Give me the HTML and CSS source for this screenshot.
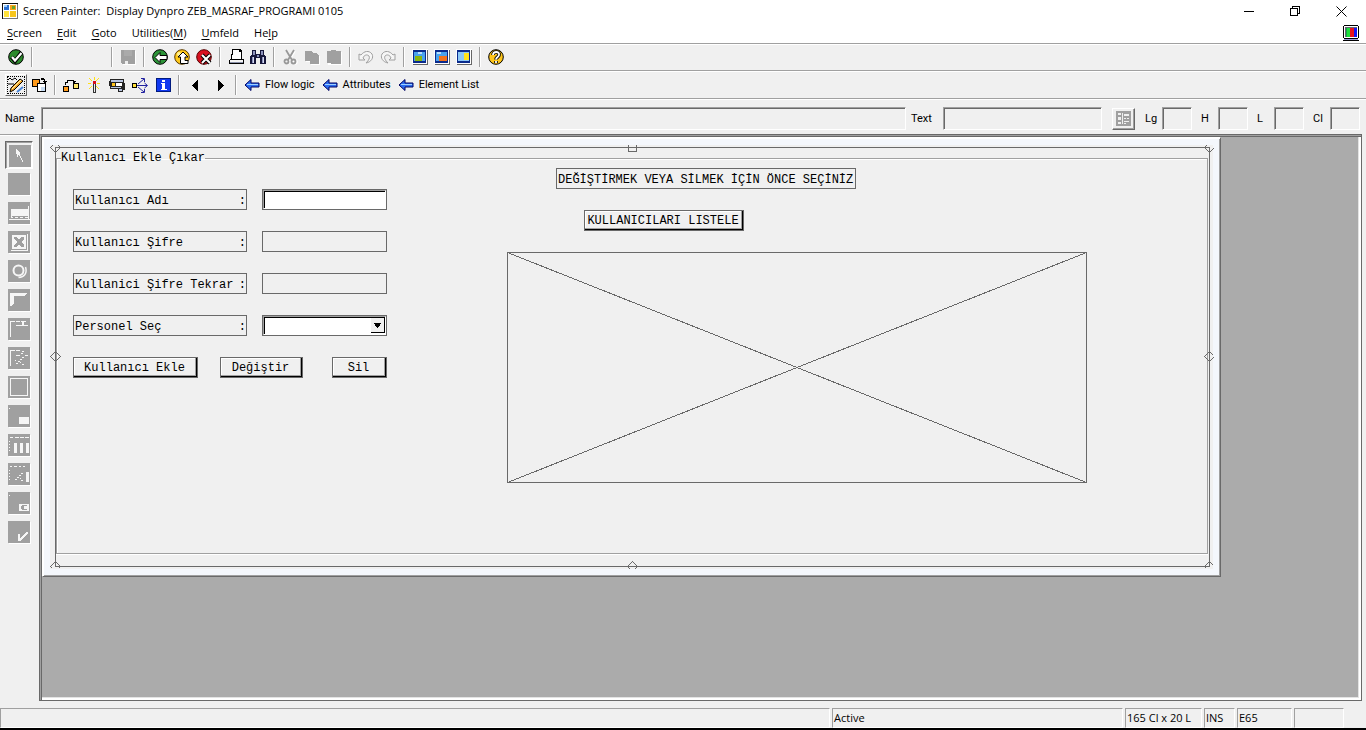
FILE: index.html
```html
<!DOCTYPE html>
<html lang="tr">
<head>
<meta charset="utf-8">
<title>Screen Painter</title>
<link rel="stylesheet" href="styles.css">
</head>
<body>
<header class="titlebar">
  <svg class="ic" viewBox="0 0 16 16"><path fill="#111" d="M0 0h16v16H0z"/><path fill="#fff" d="M1 1h14v14H1z"/><path fill="#2a6fd0" d="M2 2h5v5H2z"/><path fill="#f7a21b" d="M8 2h6v5H8z"/><path fill="#ffe23a" d="M2 8h5v6H2z"/><path fill="#f7c51b" d="M8 8h6v6H8z"/><path fill="#6ca82a" d="M10 3h3v3h-3z"/><path fill="#9bd0ff" d="M2 2h3v2H2z"/><path fill="#777" d="M15 1h1v15h-1zM1 15h15v1H1z"/></svg>
  <h1 class="title">Screen Painter:&nbsp; Display Dynpro ZEB_MASRAF_PROGRAMI 0105</h1>
  <button class="win" aria-label="Minimize"><svg viewBox="0 0 11 11"><path d="M0 5.500h10" stroke="#000"/></svg></button>
  <button class="win" aria-label="Restore"><svg viewBox="0 0 11 11"><path d="M.5 2.500h7v7h-7zM2.500 2V.5h7v7H8" fill="none" stroke="#000"/></svg></button>
  <button class="win" aria-label="Close"><svg class="smooth" viewBox="0 0 11 11"><path d="M.5.5l10 10M10.500.5l-10 10" stroke="#000"/></svg></button>
</header>
<nav class="menubar">
  <button><u>S</u>creen</button><button><u>E</u>dit</button><button><u>G</u>oto</button><button>Utilities(<u>M</u>)</button><button><u>U</u>mfeld</button><button>He<u>l</u>p</button>
  <svg class="ic tv" viewBox="0 0 16 16"><path d="M1 0h14v1h1v12h-1v2h1v1H0v-1h1v-2H0V1h1z"/><path fill="#fff" d="M1 1h14v12H1z"/><path fill="#667" d="M2 2h12v10H2z"/><path fill="#17a54a" d="M3 3h1v9H3z"/><path fill="#1ee03c" d="M4 3h3v9H4z"/><path fill="#e8111c" d="M7 3h4v9H7z"/><path fill="#1414f0" d="M11 3h3v9h-3z"/><path fill="#9a9ad8" d="M1 14h14v1H1z"/></svg>
</nav>
<div class="toolbar">
  <button aria-label="Enter"><svg class="smooth" viewBox="0 0 16 16"><circle cx="8" cy="8" r="7.300" fill="#2c8a2c" stroke="#000"/><path d="M3.500 8l3.500 4L13.500 3.500" fill="none" stroke="#000" stroke-width="4"/><path d="M4 8l3 3.500L13.500 4" fill="none" stroke="#fff" stroke-width="2.200"/></svg></button>
  <i class="sep"></i>
  <input class="command" aria-label="Command">
  <i class="sep"></i>
  <button aria-label="Save" disabled><svg viewBox="0 0 16 16"><path fill="#fff" d="M2 2h14v14H3z"/><path fill="#a0a0a0" d="M1 1h14v14H2l-1-1z"/><path fill="#aaa" d="M4 1h8v6H4z"/><path fill="#efefef" d="M5 12h3v3H5z"/></svg></button>
  <i class="sep"></i>
  <button aria-label="Back"><svg class="smooth" viewBox="0 0 16 16"><circle cx="8" cy="8" r="7.300" fill="#2c9438" stroke="#000"/><path d="M3 8.500l5-5v3h7v4H8v3z" fill="#fff" stroke="#000"/></svg></button>
  <button aria-label="Exit"><svg class="smooth" viewBox="0 0 16 16"><circle cx="8" cy="8" r="7.300" fill="#ffc91a" stroke="#5b3a00"/><circle cx="5" cy="5" r="2" fill="#fff29a"/><path d="M9 3l5 5h-3v3.500h3v3H6.500V8H4z" fill="#fff" stroke="#000"/></svg></button>
  <button aria-label="Cancel"><svg class="smooth" viewBox="0 0 16 16"><circle cx="8" cy="8" r="7.300" fill="#d81020" stroke="#500"/><path d="M6 6l8 8M14 6l-8 8" stroke="#000" stroke-width="4"/><path d="M6 6l8 8M14 6l-8 8" stroke="#fff" stroke-width="2"/></svg></button>
  <i class="sep"></i>
  <button aria-label="Print"><svg viewBox="0 0 16 16"><path d="M4 0h8l2 2v8h1l1 1v4H1v-4l2-1z"/><path fill="#fff" d="M5 1h6v2h2v7H4V6h1z"/><path fill="#f4f4f4" d="M2 11h13v2H2z"/><path fill="#8a90a8" d="M2 13h13v1H2z"/></svg></button>
  <button aria-label="Find"><svg viewBox="0 0 16 16"><path fill="#16163a" d="M2 1h4v4h4V1h4v4l2 3v7h-6V9H6v6H0V8l2-3z"/><path fill="#8d93bd" d="M3 2h2v4H3zM11 2h2v4h-2zM7 6h2v2H7zM2 8h1v6H2zM12 8h1v6h-1z"/><path fill="#d5d8ef" d="M3 8h1v6H3zM13 8h1v6h-1z"/></svg></button>
  <i class="sep"></i>
  <button aria-label="Cut" disabled><svg class="smooth" viewBox="0 0 16 16"><g fill="none" stroke="#fff" stroke-width="1.600"><path d="M5 2l6 10M13 2L7 12"/><circle cx="5" cy="13" r="2"/><circle cx="13" cy="13" r="2"/></g><g fill="none" stroke="#989898" stroke-width="1.800"><path d="M4 1l6 10M12 1L6 11"/><circle cx="4.500" cy="12.500" r="2"/><circle cx="11.500" cy="12.500" r="2"/></g></svg></button>
  <button aria-label="Copy" disabled><svg viewBox="0 0 16 16"><path fill="#fff" d="M2 3h7v2h4l3 3v8H7v-3H2z"/><path fill="#a0a0a0" d="M1 2h6l2 2h3l3 3v8H6v-3H1z"/></svg></button>
  <button aria-label="Paste" disabled><svg viewBox="0 0 16 16"><path fill="#fff" d="M2 3h14v13H2z"/><path fill="#a0a0a0" d="M1 2h4V1h5v1h5v13H5v-1H1z"/></svg></button>
  <i class="sep"></i>
  <button aria-label="Undo" disabled><svg class="smooth" viewBox="0 0 16 16"><path d="M1 5v6h6l-2-2c1-3 4-4 6-2 1 2 0 4-3 7 5-1 8-5 6-9-3-4-8-3-11 1z" fill="#f6f6f6" stroke="#a0a0a0"/></svg></button>
  <button aria-label="Redo" disabled><svg class="smooth" viewBox="0 0 16 16"><path d="M15 5v6H9l2-2c-1-3-4-4-6-2-1 2 0 4 3 7-5-1-8-5-6-9 3-4 8-3 11 1z" fill="#f6f6f6" stroke="#a0a0a0"/></svg></button>
  <i class="sep"></i>
  <button aria-label="Create session"><svg viewBox="0 0 16 16"><path fill="#666" d="M1 1h15v15H1z"/><path fill="#fff" d="M0 0h16v1H1v14H0zM1 14h14v1H1zM14 1h1v13h-1z"/><path fill="#0a2a8c" d="M1 1h13v13H1z"/><path fill="#4aa3ee" d="M2 3h11v9H2z"/><path fill="#b8e0ff" d="M6 3h4v2H6z"/><path fill="#8ab60e" d="M3 7h7v5H3z"/></svg></button>
  <button aria-label="Create shortcut"><svg viewBox="0 0 16 16"><path fill="#666" d="M1 1h15v15H1z"/><path fill="#fff" d="M0 0h16v1H1v14H0zM1 14h14v1H1zM14 1h1v13h-1z"/><path fill="#0a2a8c" d="M1 1h13v13H1z"/><path fill="#4aa3ee" d="M2 3h11v9H2z"/><path fill="#b8e0ff" d="M3 3h4v2H3z"/><path fill="#f4731c" d="M5 7h8v5H5z"/></svg></button>
  <button aria-label="Layout menu"><svg viewBox="0 0 16 16"><path fill="#666" d="M1 1h15v15H1z"/><path fill="#fff" d="M0 0h16v1H1v14H0zM1 14h14v1H1zM14 1h1v13h-1z"/><path fill="#0a2a8c" d="M1 1h13v13H1z"/><path fill="#8cc8f6" d="M2 3h11v9H2z"/><path fill="#ffe21a" d="M8 4h5v7H8z"/></svg></button>
  <i class="sep"></i>
  <button aria-label="Help"><svg class="smooth" viewBox="0 0 16 16"><circle cx="8" cy="8" r="7.300" fill="#ffc61a" stroke="#000"/><path d="M5 6c0-4 7-4 6 0 0 2-3 2-3 4.500M8 12v2" fill="none" stroke="#000" stroke-width="3.600"/><path d="M5 6c0-4 7-4 6 0 0 2-3 2-3 4.500M8 12v2" fill="none" stroke="#fff" stroke-width="1.800"/></svg></button>
</div>
<div class="toolbar app">
  <button class="active" aria-label="Display / change"><svg class="smooth" viewBox="0 0 18 18"><path d="M1 4l2-2 2 2 3-2 2 2M1 8h6" fill="none" stroke="#000"/><path d="M3 16l1-4 9-9 3 2-9 9z" fill="#f5a623" stroke="#000"/><path d="M5 13l9-9" stroke="#fff0b0"/><path d="M10 16l6-5" stroke="#4a86d8" stroke-width="2"/></svg></button>
  <button aria-label="Other object"><svg viewBox="0 0 16 16"><path d="M0 2h8v8H0z"/><path fill="#ff9a1a" d="M1 3h6v6H1z"/><path d="M5 6h9v9H5z"/><path fill="#fff" d="M6 7h7v7H6z"/><path fill="#c8ddf4" d="M9 10h4v4H9z"/><path d="M9 1h3v1h1v1h-4zM12 2h1v2h2v1h-1v1h-2V5h-1V4h1z"/></svg></button>
  <i class="sep"></i>
  <button aria-label="Check"><svg viewBox="0 0 16 16"><path d="M0 9h6v6H0zM10 6h6v6h-6z"/><path fill="#ff9a1a" d="M1 10h4v4H1z"/><path fill="#ffe869" d="M11 7h4v4h-4z"/><path fill="none" stroke="#000" d="M2.500 8V5.500h2v-2h6v2"/><path d="M9 4h4l-2 2z"/></svg></button>
  <button aria-label="Activate"><svg viewBox="0 0 16 16"><path d="M3 1l3 3M13 1l-3 3M2 6.500h3M11 6.500h3M3 12l3-3M13 12l-3-3M8 0v3" stroke="#ffe01a" fill="none"/><path fill="#d81020" d="M7 4h3v3H7z"/><path fill="#333" d="M7 7h3v9H7z"/><path fill="#eee" d="M8 7h1v8H8z"/></svg></button>
  <button aria-label="Test"><svg viewBox="0 0 16 16"><path fill="#222" d="M1 2h14v4h1v7h-2v2H9v-3H1V9H0V4h1z"/><path fill="#b8c4e0" d="M2 3h12v2H2zM10 12h3v2h-3z"/><path fill="#ffc21a" d="M3 6h3v3H3z"/><path fill="#fff" d="M7 6h6v3H7z"/><path fill="#b8c4e0" d="M2 10h10v1H2z"/></svg></button>
  <button aria-label="Where-used list"><svg class="smooth" viewBox="0 0 16 16"><path fill="none" stroke="#2222a0" d="M5 8.500h10M6 7l6-5M6 10l6 5M12.500 6l3 2.500-3 2.500M9 1.500h3.500V5M9 15.500h3.500V12"/><path d="M0 6h5v5H0z"/><path fill="#ffe03a" d="M1 7h3v3H1z"/></svg></button>
  <button aria-label="Information"><svg viewBox="0 0 16 16"><path fill="#001a80" d="M1 1h15v14H1z"/><path fill="#1038f0" d="M2 2h13v12H2z"/><path fill="#fff" d="M7 3h3v2H7zM6 6h4v6h2v1H6v-1h1V7H6z"/></svg></button>
  <i class="sep"></i>
  <button class="step" aria-label="Previous"><svg viewBox="0 0 16 16"><path d="M10 3v11L4 8.500z"/></svg></button>
  <button class="step" aria-label="Next"><svg viewBox="0 0 16 16"><path d="M6 3v11l6-5.500z"/></svg></button>
  <i class="sep"></i>
  <button class="link"><svg class="smooth" viewBox="0 0 16 16"><path d="M1 8l6-5.500v3.500h8v4H7v3.500z" fill="#2c6cf0" stroke="#000060"/><path d="M3 7.500h11" stroke="#9fd0ff"/></svg>Flow logic</button>
  <button class="link"><svg class="smooth" viewBox="0 0 16 16"><path d="M1 8l6-5.500v3.500h8v4H7v3.500z" fill="#2c6cf0" stroke="#000060"/><path d="M3 7.500h11" stroke="#9fd0ff"/></svg>Attributes</button>
  <button class="link"><svg class="smooth" viewBox="0 0 16 16"><path d="M1 8l6-5.500v3.500h8v4H7v3.500z" fill="#2c6cf0" stroke="#000060"/><path d="M3 7.500h11" stroke="#9fd0ff"/></svg>Element List</button>
</div>
<div class="fieldbar">
  <label class="name" for="f-name">Name</label><input class="grow" id="f-name" disabled>
  <label class="text" for="f-text">Text</label><input class="wide" id="f-text" disabled>
  <button class="list" aria-label="Text list" disabled><svg viewBox="0 0 15 15"><path fill="#a0a0a0" d="M0 0h15v15H0z"/><path fill="#f0f0f0" d="M2 2h3v2H2zM2 6h3v3H2zM2 11h3v2H2zM6 2h1v11H6zM8 3h5v2H8zM8 7h2v1H8zM11 7h2v1h-2zM8 10h5v1H8zM8 12h2v1H8z"/></svg></button>
  <label for="f-lg">Lg</label><input id="f-lg" disabled>
  <label for="f-h">H</label><input id="f-h" disabled>
  <label for="f-l">L</label><input id="f-l" disabled>
  <label for="f-cl">Cl</label><input id="f-cl" disabled>
</div>
<main class="main">
  <aside class="palette">
    <button class="pressed" aria-label="Select"><svg viewBox="0 0 22 22"><path d="M7 4h1v1h1v1h1v1h1v4h1v2h1v2h1v2h-1v-2h-1v-2h-1v-2h-1v-1H9v2H8V9H7z"/></svg></button>
    <button aria-label="Text field"><svg viewBox="0 0 22 22"></svg></button>
    <button aria-label="Input field"><svg viewBox="0 0 22 22"><path d="M3 7h17v7H3zM1 17h21v1H1zM20 4h1v14h-1zM3 14h1v2H3zM3 15h2v1H3zM7 15h3v1H7zM12 15h3v1h-3zM17 15h3v1h-3z"/></svg></button>
    <button aria-label="Checkbox"><svg viewBox="0 0 22 22"><path d="M4 4h14v14H4zM19 3h1v17H3v-1h16z"/><path class="cut" d="M6 6h3l2 3 2-3h3v2l-3 3 3 3v2h-3l-2-3-2 3H6v-2l3-3-3-3z"/></svg></button>
    <button aria-label="Radio button"><svg class="smooth" viewBox="0 0 22 22"><g fill="none" stroke="#f6f6f6"><circle cx="10.500" cy="10.500" r="5" stroke-width="2"/><path d="M17.500 7c2 6-1 10-7 10.500" stroke-width="1.500"/></g></svg></button>
    <button aria-label="Pushbutton"><svg viewBox="0 0 22 22"><path d="M2 4h17v1h-1v1h-1v1H6v8H5v1H4v1H2z"/></svg></button>
    <button aria-label="Tabstrip"><svg viewBox="0 0 22 22"><path d="M2 3h5v1H3v15H2zM8 3h4v1H8zM13 3h5v1h-2v3h4v1H8V7h6V4h-1z"/></svg></button>
    <button aria-label="Tabstrip wizard"><svg viewBox="0 0 22 22"><path d="M2 3h5v1H3v15H2zM8 3h4v1H8zM14 4h2v1h-2zM13 6h2v1h-2zM8 8h4v1H8zM17 8h3v1h-3zM14 10h2v1h-2zM12 12h2v1h-2zM10 14h2v1h-2zM8 16h2v1H8zM12 15h1v1h-1zM7 13h1v1H7zM14 17h2v1h-2z"/></svg></button>
    <button aria-label="Box"><svg viewBox="0 0 22 22"><path fill-rule="evenodd" d="M2 2h18v18H2zM3 3v16h16V3z"/></svg></button>
    <button aria-label="Subscreen area"><svg viewBox="0 0 22 22"><path d="M11 12h10v7H11zM1 3h1v1H1z"/></svg></button>
    <button aria-label="Table control"><svg viewBox="0 0 22 22"><path d="M2 3h3v1H2zM7 3h4v1H7zM12 3h4v1h-4zM17 3h4v1h-4zM6 9h3v10H6zM12 9h3v10h-3zM18 9h3v10h-3zM1 7h1v1H1zM1 10h1v1H1zM1 13h1v1H1zM1 16h1v1H1z"/></svg></button>
    <button aria-label="Table control wizard"><svg viewBox="0 0 22 22"><path d="M2 3h2v1H2zM6 3h3v1H6zM11 3h2v1h-2zM15 3h2v1h-2zM18 9h3v10h-3zM1 7h1v1H1zM1 10h1v1H1zM1 13h1v1H1zM1 16h1v1H1zM13 10h2v1h-2zM11 12h2v1h-2zM9 14h2v1H9zM7 16h2v1H7zM12 15h1v1h-1zM13 17h2v1h-2z"/></svg></button>
    <button aria-label="Custom control"><svg viewBox="0 0 22 22"><path d="M11 12h10v7H11zM1 3h1v1H1z"/><path class="cut" d="M14 13h5v1h-3v3h3v1h-5v-1h-1v-3h1z"/></svg></button>
    <button aria-label="Status icon"><svg viewBox="0 0 22 22"><path d="M10 13h2v4l6-6h2v1l-8 8h-2z"/></svg></button>
  </aside>
  <section class="workspace">
    <div class="screen">
      <div class="frame">
        <svg class="handle nw" viewBox="0 0 11 11"><path d="M2.500 3.500l-2 2 5 5 5-5-2-2"/></svg>
        <svg class="handle n" viewBox="0 0 11 11"><path d="M1.500 3v6h8V3"/></svg>
        <svg class="handle ne" viewBox="0 0 11 11"><path d="M2.500 3.500l-2 2 5 5 4-4"/></svg>
        <svg class="handle w" viewBox="0 0 11 11"><path d="M.5 5.500l5-5 5 5-5 5z"/></svg>
        <svg class="handle e" viewBox="0 0 11 11"><path d="M9.500 4.500l-4-4-5 5 5 5 4-4"/></svg>
        <svg class="handle sw" viewBox="0 0 11 11"><path d="M2.500 7.500l-2-2 5-5 5 5-2 2"/></svg>
        <svg class="handle s" viewBox="0 0 11 11"><path d="M3.500 8.500l-3-3 5-5 5 5-3 3"/></svg>
        <svg class="handle se" viewBox="0 0 11 11"><path d="M2.500 7.500l-2-2 5-5 4 4"/></svg>
        <fieldset class="group">
          <legend>Kullanıcı Ekle Çıkar</legend>
          <div class="cells">
            <div class="cell hint">DEĞİŞTİRMEK VEYA SİLMEK İÇİN ÖNCE SEÇİNİZ</div>
            <button class="cell push list-users">KULLANICILARI LISTELE</button>
            <svg class="custom" viewBox="0 0 580 231" preserveAspectRatio="none"><path d="M.5.500h579v230H.5zL579.500 230.500M.5 230.500L579.500.5"/></svg>
            <label class="cell lab r2" for="u-name">Kullanıcı Adı<span>:</span></label>
            <div class="cell val r2"><input id="u-name"></div>
            <label class="cell lab r4" for="u-pass">Kullanıcı Şifre<span>:</span></label>
            <div class="cell val r4"><input class="plain" id="u-pass" type="password"></div>
            <label class="cell lab r6" for="u-pass2">Kullanici Şifre Tekrar<span>:</span></label>
            <div class="cell val r6"><input class="plain" id="u-pass2" type="password"></div>
            <label class="cell lab r8" for="u-person">Personel Seç<span>:</span></label>
            <div class="cell val r8"><select id="u-person"><option></option></select></div>
            <button class="cell push add">Kullanıcı Ekle</button>
            <button class="cell push edit">Değiştir</button>
            <button class="cell push del">Sil</button>
          </div>
        </fieldset>
      </div>
    </div>
  </section>
</main>
<footer class="status">
  <span></span><span>Active</span><span>165 Cl x 20 L</span><span>INS</span><span>E65</span><span></span>
</footer>
</body>
</html>
```
FILE: styles.css
```css
:root {
  --face: #f0f0f0;
  --mid: #a0a0a0;
  --dark: #696969;
  --col: 7px;
  --row: 21px;
}
* { box-sizing: border-box; }
body {
  margin: 0;
  height: 100vh;
  display: flex;
  flex-direction: column;
  overflow: hidden;
  background: var(--face);
  color: #000;
  font: 11px/16px Roboto, "Liberation Sans", Arial, sans-serif;
}
button, input, select { font: inherit; color: inherit; margin: 0; padding: 0; border: 0; background: none; border-radius: 0; }
svg { display: block; shape-rendering: crispEdges; }
svg.smooth { shape-rendering: auto; }
.ic { width: 16px; height: 16px; flex: none; }

.titlebar, .menubar, .status { font: 11px/16px "Open Sans", "Noto Sans", sans-serif; }
.titlebar { display: flex; align-items: center; height: 22px; padding: 0 2px; background: #fff; }
.title { flex: 1; margin: 0 0 0 5px; font: inherit; white-space: nowrap; }
.win { width: 46px; height: 20px; display: grid; place-items: center; }
.win svg { width: 11px; height: 11px; }

.menubar { display: flex; align-items: center; gap: 15px; height: 22px; padding: 0 7px; background: #fff; border-bottom: 1px solid var(--mid); box-shadow: 0 1px #fff; }
.menubar u { text-underline-offset: 2px; }
.tv { margin-left: auto; }

.toolbar { display: flex; align-items: center; gap: 6px; height: 27px; padding: 0 8px; border-bottom: 1px solid var(--mid); box-shadow: 0 1px #fff; }
.toolbar button svg { width: 16px; height: 16px; }
.sep { width: 2px; height: 20px; margin: 0 1px; background: linear-gradient(90deg, var(--mid) 50%, #fff 50%); }
.command { width: 64px; height: 20px; outline: 0; }
.app { height: 28px; gap: 7px; padding-left: 5px; }
.app .active { width: 22px; height: 22px; padding: 1px; border: 1px solid; border-color: #fff var(--dark) var(--dark) #fff; outline: 1px dotted #000; outline-offset: -3px; }
.app .active svg { width: 18px; height: 18px; }
.app .active + button { margin: 0 -1px 0 -2px; }
.app .sep { margin: 0; }
.step { margin-left: 1px; }
.link { display: flex; align-items: center; gap: 5px; white-space: nowrap; }

.fieldbar { display: flex; align-items: center; height: 35px; padding: 4px 6px 0 5px; }
.fieldbar label { margin-left: 9px; width: 17px; }
.fieldbar .name { margin: 0; width: 36px; }
.fieldbar .text { margin-left: 5px; width: 32px; }
.fieldbar input { width: 30px; height: 23px; border: 1px solid; border-color: var(--mid) #fff #fff var(--mid); box-shadow: inset 1px 1px var(--dark); }
.fieldbar .grow { flex: 1; width: auto; }
.fieldbar .wide { width: 159px; }
.list { width: 23px; height: 22px; margin: 0 1px 0 10px; display: grid; place-items: center; border: 1px solid; border-color: #fff var(--dark) var(--dark) #fff; box-shadow: inset -1px -1px var(--mid); }
.list svg { width: 15px; height: 15px; }

.main { flex: 1; display: flex; min-height: 0; padding-right: 4px; }
.palette { width: 39px; padding: 6px 5px 5px; display: flex; flex-direction: column; gap: 1px; border-top: 1px solid var(--mid); box-shadow: inset 0 1px #fff; }
.palette button { width: 28px; height: 28px; padding: 3px; flex: none; }
.palette svg { width: 22px; height: 22px; background: var(--mid); fill: #f6f6f6; box-shadow: 1px 1px #fff; }
.palette .cut { fill: var(--mid); }
.palette .pressed { padding: 3px 1px 1px 3px; border: 1px solid; border-color: var(--dark) #fff #fff var(--dark); box-shadow: inset 1px 1px var(--mid); }

.workspace { flex: 1; min-width: 0; overflow: hidden; background: #ababab; border: 1px solid var(--dark); box-shadow: inset 1px 1px var(--mid), inset 2px 2px var(--dark), inset -2px -2px #fff, inset -3px -3px #e3e3e3; padding: 2px; }
.screen { width: max-content; padding: 9px 10px 9px 12px; background: var(--face); border: 1px solid; border-color: #fff var(--dark) var(--dark) #fff; box-shadow: inset 1px 1px #fff, inset -1px -1px var(--mid), inset 7px 7px #f4f7fc, inset -7px -7px #f4f7fc; }
.frame { position: relative; width: calc(165 * var(--col)); height: calc(20 * var(--row)); border: 1px solid var(--dark); padding: 0 0 12px; font: 12px/15px "Liberation Mono", "Courier New", monospace; }
.handle { position: absolute; width: 11px; height: 11px; fill: none; stroke: var(--dark); }
.nw, .n, .ne { top: -6px; }
.w, .e { top: calc(50% - 6px); }
.sw, .s, .se { bottom: -6px; }
.nw, .w, .sw { left: -6px; }
.n, .s { left: calc(50% - 6px); }
.ne, .e, .se { right: -6px; }

.group { height: 100%; margin: 0 1px 0 0; min-width: 0; padding: 0 0 0 16px; border: 1px solid var(--mid); box-shadow: 0 1px #fff, inset 1px 1px #fff; }
.group legend { margin-left: -12px; padding: 0; line-height: 20px; white-space: nowrap; }
.cells { display: grid; grid-template-columns: repeat(162, var(--col)); grid-auto-rows: var(--row); }
.cell { height: var(--row); border: 1px solid var(--dark); margin-right: 1px; padding: 4px 1px 0; white-space: nowrap; overflow: hidden; }
.lab { grid-column: 1 / span 25; display: flex; justify-content: space-between; padding-right: 0; }
.val { grid-column: 28 / span 18; display: flex; padding: 0; }
.r2 { grid-row: 2; }
.r4 { grid-row: 4; }
.r6 { grid-row: 6; }
.r8 { grid-row: 8; }
.val input, .val select { width: 100%; height: 100%; outline: 0; background: #fff; border: 1px solid; border-color: var(--mid) #fff #fff var(--mid); box-shadow: inset 1px 1px #000; }
.val .plain { background: none; border: 0; box-shadow: none; }
.val select {
  appearance: none;
  background:
    linear-gradient(#000, #000) right 4px top 6px / 7px 1px no-repeat,
    linear-gradient(#000, #000) right 5px top 7px / 5px 2px no-repeat,
    linear-gradient(#000, #000) right 6px top 9px / 3px 1px no-repeat,
    linear-gradient(#000, #000) right 7px top 10px / 1px 1px no-repeat,
    linear-gradient(var(--face), var(--face)) right 1px top 1px / 13px 14px no-repeat,
    linear-gradient(#000, #000) right 0 top 1px / 14px 15px no-repeat,
    #fff;
}
.push { padding: 2px 2px 0 0; text-align: center; box-shadow: inset -1px -1px #000, inset -2px -2px var(--mid), inset 1px 1px #fff; }
.hint { grid-area: 1 / 70 / auto / span 43; }
.list-users { grid-area: 3 / 74 / auto / span 23; }
.custom { grid-area: 5 / 63 / span 11 / span 83; width: 100%; height: 100%; padding-right: 1px; fill: none; stroke: var(--dark); }
.add { grid-area: 10 / 1 / auto / span 18; }
.edit { grid-area: 10 / 22 / auto / span 12; }
.del { grid-area: 10 / 38 / auto / span 8; }

.status { display: grid; grid-template-columns: 1fr 291px 77px 31px 55px 50px; gap: 2px; margin-top: 7px; padding-right: 22px; border-bottom: 2px solid #000; }
.status span { height: 20px; padding: 0 1px; line-height: 18px; white-space: nowrap; border: 1px solid; border-color: var(--mid) #fff #fff var(--mid); }
```
